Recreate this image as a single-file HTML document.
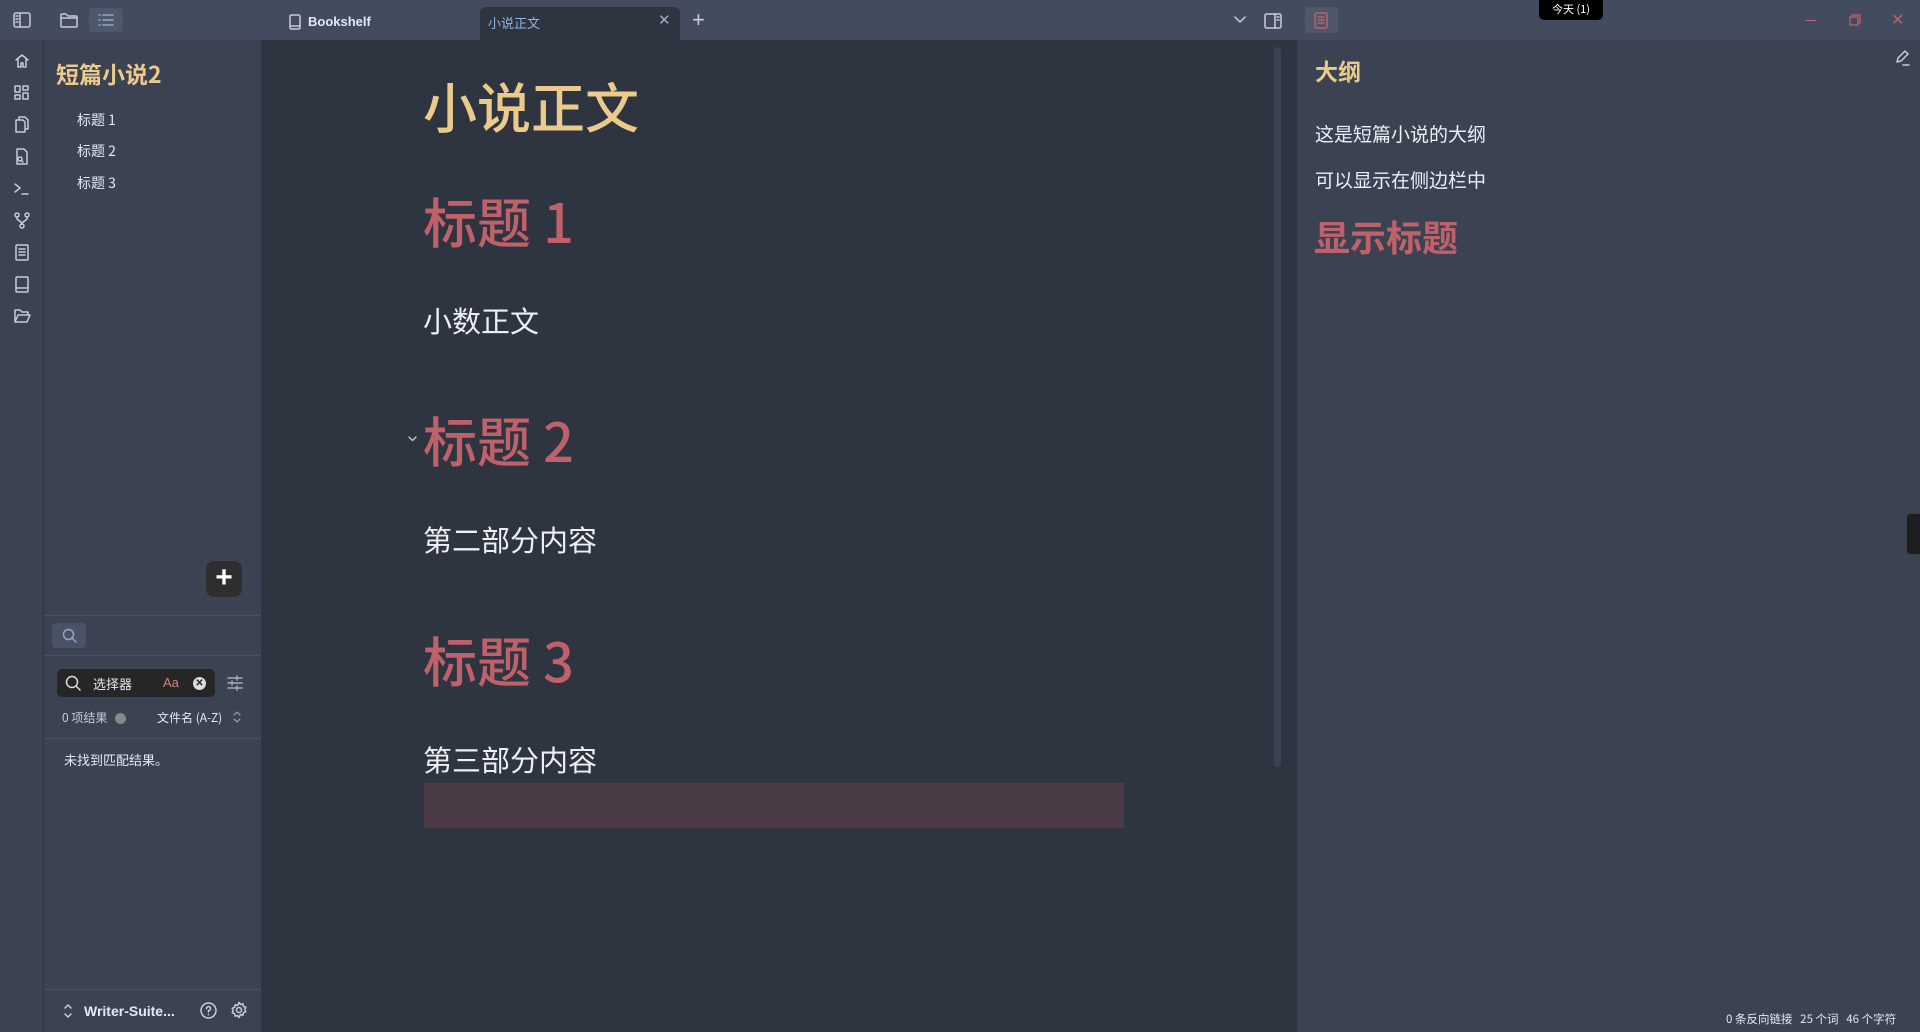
<!DOCTYPE html>
<html><head><meta charset="utf-8"><style>
*{box-sizing:border-box;margin:0;padding:0}
body{width:1920px;height:1032px;overflow:hidden;background:#2e3440;font-family:"Liberation Sans","Noto Sans CJK SC",sans-serif;color:#e5e9f0;position:relative}
.a{position:absolute}
.cjk{font-family:"Noto Sans CJK SC","Liberation Sans",sans-serif}
svg{position:absolute;fill:none;stroke:#c8ccd6;stroke-width:1.5;stroke-linecap:round;stroke-linejoin:round}
.hr{position:absolute;height:1px;background:#4a5366}
</style></head><body>
<!-- title bar -->
<div class="a" style="left:0;top:0;width:1920px;height:40px;background:#434c5e"></div>
<svg style="left:13px;top:12px" width="18" height="16" viewBox="0 0 18 16"><rect x="1" y="1" width="16" height="14" rx="2"/><path d="M7 1v14M3 4h2M3 7h2M3 10h2"/></svg>
<svg style="left:60px;top:12px" width="18" height="16" viewBox="0 0 18 16"><path d="M1 3a1 1 0 0 1 1-1h4l2 2h8a1 1 0 0 1 1 1v9a1 1 0 0 1-1 1H2a1 1 0 0 1-1-1z M1 6h16"/></svg>
<div class="a" style="left:89px;top:8px;width:34px;height:24px;background:#4f576a;border-radius:4px"></div>
<svg style="left:97px;top:12px" width="18" height="16" viewBox="0 0 18 16"><path d="M2 3h1M6 3h10M2 8h1M6 8h10M2 13h1M6 13h10" stroke="#8fa8c8"/></svg>
<svg style="left:289px;top:14px" width="12" height="16" viewBox="0 0 12 16"><rect x="1" y="1" width="10" height="14" rx="1.5"/><path d="M1 12h10"/></svg>
<div class="a" style="left:308px;top:14px;font-size:13px;font-weight:bold;color:#e5e9f0">Bookshelf</div>
<div class="a" style="left:480px;top:7px;width:200px;height:33px;background:#2e3440;border-radius:6px 6px 0 0"></div>
<div class="a cjk" style="left:488px;top:13px;font-size:13px;color:#8fb4dc">小说正文</div>
<div class="a" style="left:658px;top:11px;font-size:15px;color:#aab">✕</div>
<div class="a" style="left:692px;top:7px;font-size:22px;color:#c8ccd6;font-weight:300">+</div>
<svg style="left:1234px;top:16px" width="12" height="8" viewBox="0 0 12 8"><path d="M1 1l5 5 5-5"/></svg>
<svg style="left:1264px;top:13px" width="18" height="16" viewBox="0 0 18 16"><rect x="1" y="1" width="16" height="14" rx="1.5"/><path d="M11 1v14M13 4h2M13 7h2"/></svg>
<div class="a" style="left:1305px;top:7px;width:33px;height:26px;background:#4f576a;border-radius:4px"></div>
<svg style="left:1314px;top:12px;stroke:#bf616a" width="14" height="17" viewBox="0 0 14 17"><rect x="1" y="1" width="12" height="15" rx="1.5"/><path d="M4 5h6M4 8h6M4 11h6"/></svg>
<div class="a cjk" style="left:1539px;top:0;width:64px;height:20px;background:#000;border-radius:0 0 5px 5px;font-size:11px;color:#fff;text-align:center;line-height:19px">今天 (1)</div>
<div class="a" style="left:1805px;top:20px;width:11px;height:1px;background:#bf616a"></div>
<svg style="left:1849px;top:14px;stroke:#bf616a;stroke-width:1.2" width="12" height="12" viewBox="0 0 12 12"><rect x="1" y="3" width="8" height="8"/><path d="M3 3V1h8v8H9"/></svg>
<div class="a" style="left:1891px;top:10px;font-size:16px;color:#bf616a">✕</div>
<!-- ribbon -->
<div class="a" style="left:0;top:40px;width:44px;height:992px;background:#3b4252;border-right:1px solid #2f3542"></div>
<svg style="left:14px;top:53px" width="16" height="16" viewBox="0 0 16 16"><path d="M2 7l6-5 6 5M4 6v8h3v-4h2v4h3V6"/></svg>
<svg style="left:14px;top:85px" width="16" height="16" viewBox="0 0 16 16"><rect x="1" y="1" width="5" height="6"/><rect x="9" y="1" width="5" height="4"/><rect x="1" y="10" width="5" height="4"/><rect x="9" y="8" width="5" height="6"/></svg>
<svg style="left:14px;top:116px" width="16" height="17" viewBox="0 0 16 17"><path d="M5 4V1h6l3 3v9h-3M2 4h7l2 2v10H2z"/></svg>
<svg style="left:14px;top:148px" width="16" height="17" viewBox="0 0 16 17"><path d="M3 1h7l3 3v12H3z"/><circle cx="6" cy="11" r="2"/><path d="M7.5 12.5l1.5 1.5"/></svg>
<svg style="left:14px;top:182px" width="16" height="14" viewBox="0 0 16 14"><path d="M1 2l5 4-5 4M8 12h6"/></svg>
<svg style="left:14px;top:212px" width="16" height="17" viewBox="0 0 16 17"><circle cx="3" cy="3" r="2"/><circle cx="13" cy="3" r="2"/><circle cx="8" cy="14" r="2"/><path d="M3 5v2l5 4 5-4V5M8 11v1"/></svg>
<svg style="left:15px;top:244px" width="14" height="17" viewBox="0 0 14 17"><rect x="1" y="1" width="12" height="15" rx="1"/><path d="M4 5h6M4 8h6M4 11h6"/></svg>
<svg style="left:15px;top:276px" width="14" height="17" viewBox="0 0 14 17"><rect x="1" y="1" width="12" height="15" rx="1"/><path d="M1 12h12"/></svg>
<svg style="left:14px;top:308px" width="17" height="15" viewBox="0 0 17 15"><path d="M1 2h5l2 2h6v3M1 2v12h12l3-7H4L1 14"/></svg>
<!-- left sidebar -->
<div class="a" style="left:44px;top:40px;width:218px;height:992px;background:#3b4252;border-right:1px solid #2f3542"></div>
<div class="a cjk" style="left:56px;top:56px;font-size:23px;font-weight:bold;color:#ebcb8b">短篇小说2</div>
<div class="a cjk" style="left:77px;top:110px;font-size:14px;color:#e5e9f0">标题 1</div>
<div class="a cjk" style="left:77px;top:141px;font-size:14px;color:#e5e9f0">标题 2</div>
<div class="a cjk" style="left:77px;top:173px;font-size:14px;color:#e5e9f0">标题 3</div>
<div class="a" style="left:206px;top:561px;width:36px;height:36px;background:#2e2e30;border-radius:8px;color:#fff;font-size:30px;text-align:center;line-height:34px;font-weight:bold">+</div>
<div class="hr" style="left:44px;top:615px;width:217px"></div>
<div class="a" style="left:52px;top:623px;width:34px;height:25px;background:#4a5366;border-radius:4px"></div>
<svg style="left:62px;top:628px;stroke:#8fa8c8" width="15" height="15" viewBox="0 0 15 15"><circle cx="6.5" cy="6.5" r="5"/><path d="M10 10l4 4"/></svg>
<div class="hr" style="left:44px;top:655px;width:217px"></div>
<div class="a" style="left:57px;top:669px;width:158px;height:28px;background:#262626;border-radius:5px"></div>
<svg style="left:65px;top:675px;stroke:#ddd" width="16" height="16" viewBox="0 0 16 16"><circle cx="7" cy="7" r="5.5"/><path d="M11 11l4 4"/></svg>
<div class="a cjk" style="left:93px;top:674px;font-size:13px;color:#e5e9f0">选择器</div>
<div class="a" style="left:163px;top:675px;font-size:13px;color:#d08770">Aa</div>
<div class="a" style="left:193px;top:677px;width:13px;height:13px;border-radius:50%;background:#ddd;color:#222;font-size:10px;text-align:center;line-height:13px;font-weight:bold">✕</div>
<svg style="left:227px;top:675px;stroke:#aab" width="16" height="16" viewBox="0 0 16 16"><path d="M1 3h14M1 8h14M1 13h14M10 1v4M5 6v4M10 11v4"/></svg>
<div class="a cjk" style="left:62px;top:709px;font-size:12px;color:#c8ccd6">0 项结果</div>
<div class="a" style="left:115px;top:713px;width:11px;height:11px;border-radius:50%;background:#888"></div>
<div class="a cjk" style="left:157px;top:709px;font-size:12px;color:#e5e9f0">文件名 (A-Z)</div>
<svg style="left:233px;top:711px;stroke:#aaa;stroke-width:1" width="8" height="12" viewBox="0 0 8 12"><path d="M1 4l3-3 3 3M1 8l3 3 3-3"/></svg>
<div class="hr" style="left:44px;top:738px;width:217px"></div>
<div class="a cjk" style="left:64px;top:750px;font-size:13px;color:#e5e9f0">未找到匹配结果。</div>
<div class="hr" style="left:44px;top:989px;width:217px"></div>
<svg style="left:63px;top:1003px" width="10" height="16" viewBox="0 0 10 16"><path d="M2 5l3-3 3 3M2 11l3 3 3-3"/></svg>
<div class="a" style="left:84px;top:1003px;font-size:14px;font-weight:bold;color:#e5e9f0">Writer-Suite...</div>
<svg style="left:200px;top:1002px" width="17" height="17" viewBox="0 0 17 17"><circle cx="8.5" cy="8.5" r="7.5"/><path d="M6.5 6.5a2 2 0 1 1 2 2v1.5M8.5 12.5v.1"/></svg>
<svg style="left:230px;top:1001px" width="18" height="18" viewBox="0 0 18 18"><circle cx="9" cy="9" r="2.5"/><path d="M9 1.5l1.5 2 2.4-.7.5 2.5 2.4 1-1 2.2 1 2.2-2.4 1-.5 2.5-2.4-.7L9 16.5l-1.5-2-2.4.7-.5-2.5-2.4-1 1-2.2-1-2.2 2.4-1 .5-2.5 2.4.7z"/></svg>
<!-- editor -->
<div class="a cjk" style="left:423px;top:70px;font-size:54px;line-height:70px;color:#ebcb8b;font-weight:500">小说正文</div>
<div class="a cjk" style="left:423px;top:185px;font-size:54px;line-height:70px;color:#bf616a;font-weight:500">标题 1</div>
<div class="a cjk" style="left:423px;top:300px;font-size:29px;line-height:40px;color:#eceff4">小数正文</div>
<svg style="left:408px;top:436px;stroke:#ccc;stroke-width:1.3" width="9" height="6" viewBox="0 0 9 6"><path d="M1 1l3.5 3.5L8 1"/></svg>
<div class="a cjk" style="left:423px;top:404px;font-size:54px;line-height:70px;color:#bf616a;font-weight:500">标题 2</div>
<div class="a cjk" style="left:423px;top:519px;font-size:29px;line-height:40px;color:#eceff4">第二部分内容</div>
<div class="a cjk" style="left:423px;top:624px;font-size:54px;line-height:70px;color:#bf616a;font-weight:500">标题 3</div>
<div class="a cjk" style="left:423px;top:739px;font-size:29px;line-height:40px;color:#eceff4">第三部分内容</div>
<div class="a" style="left:424px;top:783px;width:700px;height:45px;background:#4a3b46"></div>
<div class="a" style="left:1274px;top:47px;width:7px;height:720px;background:#3b4252;border-radius:4px"></div>
<!-- right sidebar -->
<div class="a" style="left:1296px;top:40px;width:624px;height:992px;background:#3b4252;border-left:1px solid #2f3542"></div>
<div class="a cjk" style="left:1315px;top:53px;font-size:23px;font-weight:bold;color:#ebcb8b">大纲</div>
<div class="a cjk" style="left:1315px;top:120px;font-size:19px;color:#eceff4">这是短篇小说的大纲</div>
<div class="a cjk" style="left:1315px;top:166px;font-size:19px;color:#eceff4">可以显示在侧边栏中</div>
<div class="a cjk" style="left:1314px;top:210px;font-size:36px;font-weight:bold;color:#bf616a">显示标题</div>
<svg style="left:1894px;top:50px" width="16" height="16" viewBox="0 0 16 16"><path d="M3 12l1-4 7-7 3 3-7 7zM9 15h6"/></svg>
<div class="a" style="left:1907px;top:514px;width:13px;height:40px;background:#1e1e1e;border-radius:3px 0 0 3px"></div>
<div class="a cjk" style="left:1726px;top:1011px;font-size:11.5px;color:#e5e9f0;white-space:nowrap">0 条反向链接 &nbsp;&nbsp;25 个词 &nbsp;&nbsp;46 个字符</div>
</body></html>
